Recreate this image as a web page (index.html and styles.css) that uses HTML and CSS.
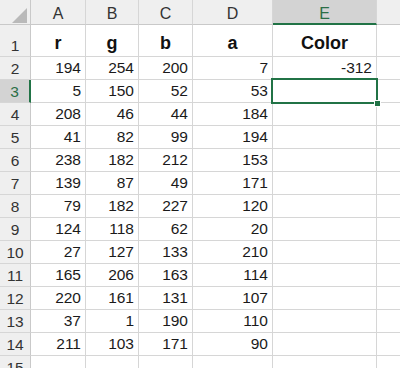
FILE: index.html
```html
<!DOCTYPE html>
<html>
<head>
<meta charset="utf-8">
<link rel="stylesheet" href="styles.css">
</head>
<body>
<div class="sheet">
  <div class="corner"><svg class="tri" width="16" height="16" viewBox="0 0 16 16"><polygon points="15,0 15,15 0,15" fill="#b9b9b9"/></svg></div>
  <div class="ch">A</div><div class="ch">B</div><div class="ch">C</div><div class="ch">D</div><div class="ch sel">E</div><div class="ch"></div>

  <div class="rh">1</div><div class="c hd">r</div><div class="c hd">g</div><div class="c hd">b</div><div class="c hd">a</div><div class="c hd">Color</div><div class="c"></div>

  <div class="rh">2</div><div class="c">194</div><div class="c">254</div><div class="c">200</div><div class="c">7</div><div class="c">-312</div><div class="c"></div>
  <div class="rh sel">3</div><div class="c">5</div><div class="c">150</div><div class="c">52</div><div class="c">53</div><div class="c active"><span class="handle"></span></div><div class="c"></div>
  <div class="rh">4</div><div class="c">208</div><div class="c">46</div><div class="c">44</div><div class="c">184</div><div class="c"></div><div class="c"></div>
  <div class="rh">5</div><div class="c">41</div><div class="c">82</div><div class="c">99</div><div class="c">194</div><div class="c"></div><div class="c"></div>
  <div class="rh">6</div><div class="c">238</div><div class="c">182</div><div class="c">212</div><div class="c">153</div><div class="c"></div><div class="c"></div>
  <div class="rh">7</div><div class="c">139</div><div class="c">87</div><div class="c">49</div><div class="c">171</div><div class="c"></div><div class="c"></div>
  <div class="rh">8</div><div class="c">79</div><div class="c">182</div><div class="c">227</div><div class="c">120</div><div class="c"></div><div class="c"></div>
  <div class="rh">9</div><div class="c">124</div><div class="c">118</div><div class="c">62</div><div class="c">20</div><div class="c"></div><div class="c"></div>
  <div class="rh">10</div><div class="c">27</div><div class="c">127</div><div class="c">133</div><div class="c">210</div><div class="c"></div><div class="c"></div>
  <div class="rh">11</div><div class="c">165</div><div class="c">206</div><div class="c">163</div><div class="c">114</div><div class="c"></div><div class="c"></div>
  <div class="rh">12</div><div class="c">220</div><div class="c">161</div><div class="c">131</div><div class="c">107</div><div class="c"></div><div class="c"></div>
  <div class="rh">13</div><div class="c">37</div><div class="c">1</div><div class="c">190</div><div class="c">110</div><div class="c"></div><div class="c"></div>
  <div class="rh">14</div><div class="c">211</div><div class="c">103</div><div class="c">171</div><div class="c">90</div><div class="c"></div><div class="c"></div>
  <div class="rh">15</div><div class="c"></div><div class="c"></div><div class="c"></div><div class="c"></div><div class="c"></div><div class="c"></div>
</div>
</body>
</html>
```
FILE: styles.css
```css
html, body {
  margin: 0;
  padding: 0;
  background: #ffffff;
  overflow: hidden;
}
.sheet {
  display: grid;
  grid-template-columns: 31px 55px 53px 54px 80px 104px 60px;
  grid-template-rows: 25px 32px repeat(14, 23px);
  width: 437px;
  font-family: "Liberation Sans", Arial, sans-serif;
  font-size: 15.5px;
  color: #1a1a1a;
}
.sheet > div {
  box-sizing: border-box;
  border-right: 1px solid #d6d6d6;
  border-bottom: 1px solid #d6d6d6;
  display: flex;
  align-items: flex-end;
  overflow: visible;
  white-space: nowrap;
}
.corner {
  background: #efefef;
  position: relative;
  border-right-color: #c9c9c9 !important;
  border-bottom-color: #c9c9c9 !important;
}
.tri {
  position: absolute;
  left: 12px;
  top: 8px;
}
.ch {
  background: #efefef;
  justify-content: center;
  font-size: 16px;
  color: #333333;
  padding-bottom: 1px;
  border-bottom-color: #c9c9c9 !important;
}
.ch.sel {
  background: #d3d3d3;
  color: #2b6e46;
  border-bottom: 2px solid #217346 !important;
  padding-bottom: 0;
}
.rh {
  background: #efefef;
  justify-content: center;
  color: #333333;
  padding-bottom: 1px;
  border-right-color: #c9c9c9 !important;
}
.rh.sel {
  background: #d3d3d3;
  color: #2b6e46;
  border-right: 2px solid #217346 !important;
}
.c {
  justify-content: flex-end;
  padding-right: 4px;
  padding-bottom: 2px;
}
.c.hd {
  justify-content: center;
  padding-right: 0;
  font-weight: bold;
  font-size: 18px;
  color: #111111;
  padding-bottom: 2px;
}
.active {
  position: relative;
}
.active::before {
  content: "";
  position: absolute;
  left: -2px;
  top: -2px;
  right: -2px;
  bottom: -2px;
  border: 2px solid #217346;
}
.handle {
  position: absolute;
  right: -5px;
  bottom: -5px;
  width: 5px;
  height: 5px;
  background: #217346;
  border: 1px solid #ffffff;
  z-index: 2;
}
```
